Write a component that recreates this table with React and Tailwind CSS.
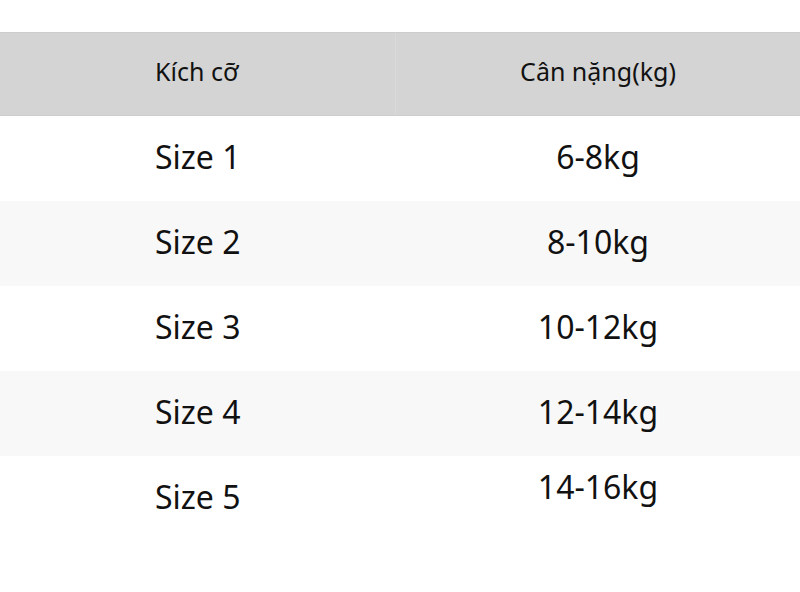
import React from "react";

const rows = [
  { size: "Size 1", weight: "6-8kg" },
  { size: "Size 2", weight: "8-10kg" },
  { size: "Size 3", weight: "10-12kg" },
  { size: "Size 4", weight: "12-14kg" },
  { size: "Size 5", weight: "14-16kg", raised: true },
];

const App = () => {
  return (
    <div
      className="w-[800px] h-[592px] bg-white text-[#111] pt-[32px]"
      style={{ fontFamily: '"Noto Sans", "Open Sans", sans-serif' }}
    >
      {/* Header */}
      <div className="flex h-[84px] bg-[#d4d4d4] border-y border-[#cdcdcd] text-[25px]">
        <div className="w-[396px] flex items-center pl-[155px] pb-[4px] border-r border-[#dadada]">
          Kích cỡ
        </div>
        <div className="flex-1 flex items-center justify-center pb-[4px]">
          Cân nặng(kg)
        </div>
      </div>

      {/* Rows */}
      {rows.map((r, i) => (
        <div
          key={r.size}
          className={`flex h-[85px] text-[32px] ${i % 2 === 1 ? "bg-[#f8f8f8]" : "bg-white"}`}
        >
          <div className="w-[396px] flex items-center pl-[155px] pb-[3px]">{r.size}</div>
          <div
            className={`flex-1 flex items-center justify-center ${r.raised ? "pb-[23px]" : "pb-[3px]"}`}
          >
            {r.weight}
          </div>
        </div>
      ))}
    </div>
  );
};

export default App;
